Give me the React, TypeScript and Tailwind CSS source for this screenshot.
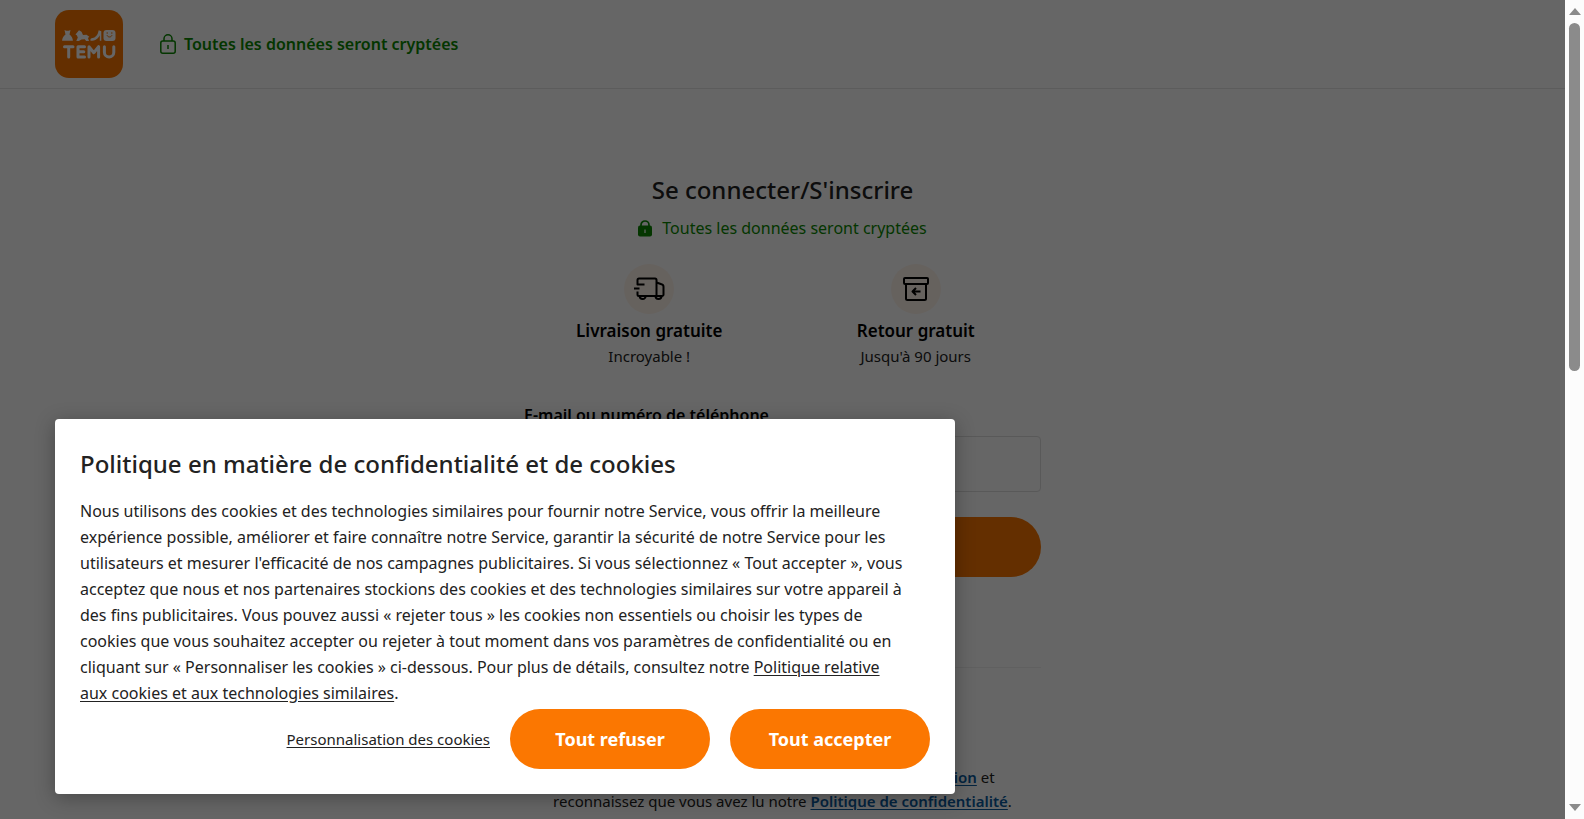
import React from "react";

const TemuLogo: React.FC = () => (
  <svg viewBox="0 0 68 68" className="size-[68px]" role="img" aria-label="Temu">
    <rect width="68" height="68" rx="14" fill="#fb7701" />
    <g fill="#fff">
      <path d="M9.500 20l1.800.8h2.400l1.800-.8-1 4.500c2 1.500 3.400 3.800 3.400 6.300H7.100c0-2.500 1.400-4.800 3.400-6.300z" />
      <path d="M20.500 24.500l3.500-4.300 2.500 1.500 1.500 3.300 3.500-.3 2.800 2-1.300 1.200 1 3h-2.800l-1.500-1.700-3.200.3-2.700 1.500h-2.500l1.500-3.500-1-2.300z" />
      <path d="M35.500 30.800c-.4-1.700.4-2.400 2.200-2.700 2.500-.6 4.200-2.300 5.200-4.800l.8-3 2.600 1v9.500h-1.500v-5.500c-1.500 3.500-4.300 5.500-9.300 5.500z" />
      <rect x="48.500" y="20" width="12" height="11" rx="3" />
    </g>
    <path
      d="M51.500 23h1.500m3 0h1.500M52 25.300c1 2.200 4 2.200 5 0"
      stroke="#fb7701"
      strokeWidth="1"
      fill="none"
    />
    <g fill="none" stroke="#fff" strokeWidth="3" strokeLinecap="round" strokeLinejoin="round">
      <path d="M9.500 36.700h8.500M13.700 36.700v10.200" />
      <path d="M29.500 36.700h-6.500v10.200h6.500M23 41.800h5.800" />
      <path d="M34 46.900V36.700l4.800 6 4.800-6v10.200" />
      <path d="M49.400 36.700v5.500c0 6.300 9.400 6.300 9.400 0v-5.500" />
    </g>
  </svg>
);

const LockOutline: React.FC = () => (
  <svg viewBox="0 0 16 20" className="h-5 w-4" fill="none" stroke="#0a8800" strokeWidth="1.500">
    <rect x=".8" y="7" width="14.400" height="12.200" rx="2" />
    <path d="M4 7V4.800a4 4 0 0 1 8 0V7M8 11v4" />
  </svg>
);

const LockSolid: React.FC = () => (
  <svg viewBox="0 0 14 17" className="h-[17px] w-[14px]">
    <rect y="5.500" width="14" height="11" rx="2" fill="#0a8800" />
    <path d="M3 6.500V5a4 4 0 0 1 8 0v1.500" fill="none" stroke="#0a8800" strokeWidth="1.700" />
    <path d="M7 9.500v3.500" stroke="#fff" strokeWidth="1.200" />
  </svg>
);

const TruckIcon: React.FC = () => (
  <svg
    viewBox="0 0 31 24"
    className="h-6 w-[31px]"
    fill="none"
    stroke="#000"
    strokeWidth="2"
    strokeLinejoin="round"
  >
    <path d="M10.500 7.500H3.500V3A1.500 1.500 0 0 1 5 1.500h16A1.500 1.500 0 0 1 22.500 3v16" />
    <path d="M0 11.500h5.500M3.500 14.500v3A1.500 1.500 0 0 0 5 19h17" />
    <path d="M22.500 5.500l5 1.700A2.500 2.500 0 0 1 29.500 9.700V17.500A1.500 1.500 0 0 1 28 19h-6" />
    <path d="M5.700 19a3 3 0 0 0 6 0M21.500 19a3 3 0 0 0 6 0" />
  </svg>
);

const ReturnIcon: React.FC = () => (
  <svg
    viewBox="0 0 26 24"
    className="h-6 w-[26px]"
    fill="none"
    stroke="#000"
    strokeWidth="2"
    strokeLinejoin="round"
  >
    <rect x="1" y="1" width="24" height="6" rx="1" />
    <path d="M3 7v14.500A1.500 1.500 0 0 0 4.500 23h17a1.500 1.500 0 0 0 1.500-1.500V7M17.500 14.500h-8M13 11l-3.500 3.500L13 18" />
  </svg>
);

interface BenefitProps {
  icon: React.ReactNode;
  title: string;
  detail: string;
}

const Benefit: React.FC<BenefitProps> = ({ icon, title, detail }) => (
  <div className="flex flex-col items-center">
    <div className="flex size-[50px] items-center justify-center rounded-full bg-[#fff5ec]">
      {icon}
    </div>
    <h2 className="mt-1 text-[17px] leading-[26px] font-semibold text-black">{title}</h2>
    <p className="text-[15px] leading-6 text-[#222]">{detail}</p>
  </div>
);

const LoginForm: React.FC = () => (
  <form className="mt-[34px] flex flex-col">
    <label htmlFor="account" className="text-[16px] leading-[26px] font-semibold text-black">
      E-mail ou numéro de téléphone
    </label>
    <input
      id="account"
      type="text"
      className="mt-2 h-14 w-full rounded border border-[#dedede] bg-white px-4 text-[16px]"
    />
    <button
      type="button"
      aria-label="Continuer"
      className="mt-[25px] h-[60px] rounded-full bg-[#fb7701]"
    />
    <hr className="mt-[90px] border-[#f0f0f0]" />
  </form>
);

const CookieDialog: React.FC = () => (
  <div
    role="dialog"
    aria-labelledby="cookie-title"
    className="absolute bottom-[25px] left-[55px] w-[900px] max-w-full rounded bg-white p-[25px] shadow-[0_4px_20px_rgba(0,0,0,0.3)]"
  >
    <h2 id="cookie-title" className="text-[24px] leading-10 font-medium text-[#222]">
      Politique en matière de confidentialité et de cookies
    </h2>
    <p className="mt-[14px] text-[16px] leading-[26px] text-[#222]">
      Nous utilisons des cookies et des technologies similaires pour fournir notre Service, vous
      offrir la meilleure
      <br />
      expérience possible, améliorer et faire connaître notre Service, garantir la sécurité de notre
      Service pour les
      <br />
      utilisateurs et mesurer l'efficacité de nos campagnes publicitaires. Si vous sélectionnez «
      Tout accepter », vous
      <br />
      acceptez que nous et nos partenaires stockions des cookies et des technologies similaires sur
      votre appareil à
      <br />
      des fins publicitaires. Vous pouvez aussi « rejeter tous » les cookies non essentiels ou
      choisir les types de
      <br />
      cookies que vous souhaitez accepter ou rejeter à tout moment dans vos paramètres de
      confidentialité ou en
      <br />
      cliquant sur « Personnaliser les cookies » ci-dessous. Pour plus de détails, consultez notre{" "}
      <a href="#cookies" className="underline underline-offset-2">
        Politique relative
        <br />
        aux cookies et aux technologies similaires
      </a>
      .
    </p>
    <div className="mt-[3px] flex items-center justify-end gap-5">
      <button type="button" className="text-[15px] text-[#222] underline underline-offset-2">
        Personnalisation des cookies
      </button>
      <button
        type="button"
        className="h-[60px] w-[200px] rounded-full bg-[#fb7701] text-[18px] font-bold text-white"
      >
        Tout refuser
      </button>
      <button
        type="button"
        className="h-[60px] w-[200px] rounded-full bg-[#fb7701] text-[18px] font-bold text-white"
      >
        Tout accepter
      </button>
    </div>
  </div>
);

const ScrollRail: React.FC = () => (
  <div className="flex w-[19px] shrink-0 flex-col items-center bg-[#fcfcfc] py-2" aria-hidden="true">
    <svg viewBox="0 0 12 7" className="h-[7px] w-3">
      <path d="M6 0l6 7H0z" fill="#8b8b8b" />
    </svg>
    <div className="mt-2 h-87 w-[11px] rounded-full bg-[#8b8b8b]" />
    <svg viewBox="0 0 12 7" className="mt-auto h-[7px] w-3">
      <path d="M6 7l6-7H0z" fill="#8b8b8b" />
    </svg>
  </div>
);

const App: React.FC = () => {
  return (
    <div className="flex h-screen overflow-hidden font-['Noto_Sans','Open_Sans',sans-serif]">
      <div className="relative min-w-0 flex-1 overflow-hidden bg-white">
        <header className="flex items-center border-b border-[#e5e5e5] px-[55px] py-[10px]">
          <TemuLogo />
          <div className="ml-[37px] flex items-center gap-2">
            <LockOutline />
            <span className="text-[16px] font-semibold text-[#0a8800]">
              Toutes les données seront cryptées
            </span>
          </div>
        </header>

        <main className="mx-auto w-full max-w-[517px] pt-[83px]">
          <h1 className="text-center text-[24px] leading-9 font-medium text-[#222]">
            Se connecter/S'inscrire
          </h1>
          <p className="mt-[7px] flex items-center justify-center gap-[10px] text-[16px] leading-[26px] text-[#0a8800]">
            <LockSolid />
            Toutes les données seront cryptées
          </p>
          <div className="mt-[23px] grid grid-cols-2 gap-4">
            <Benefit icon={<TruckIcon />} title="Livraison gratuite" detail="Incroyable !" />
            <Benefit icon={<ReturnIcon />} title="Retour gratuit" detail="Jusqu'à 90 jours" />
          </div>
          <LoginForm />
          <p className="mt-[97px] text-center text-[15px] leading-6 text-[#222]">
            En continuant, vous acceptez nos{" "}
            <a href="#terms" className="font-semibold text-[#0a5a9e] underline underline-offset-2">
              Conditions d'utilisation
            </a>{" "}
            et
            <br />
            reconnaissez que vous avez lu notre{" "}
            <a href="#privacy" className="font-semibold text-[#0a5a9e] underline underline-offset-2">
              Politique de confidentialité
            </a>
            .
          </p>
        </main>

        <div className="absolute inset-0 bg-black/60" />
        <CookieDialog />
      </div>
      <ScrollRail />
    </div>
  );
};

export default App;
